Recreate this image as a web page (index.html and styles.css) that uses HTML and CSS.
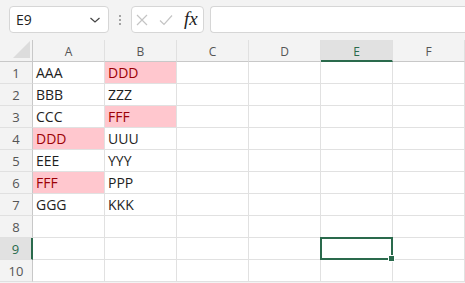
FILE: index.html
```html
<!DOCTYPE html>
<html lang="en">
<head>
<meta charset="utf-8">
<title>Sheet1</title>
<link rel="stylesheet" href="styles.css">
</head>
<body>
<div class="app">
  <div class="formula-row">
    <div class="name-box">
      <span class="name-text">E9</span>
      <svg class="chev" width="12" height="8" viewBox="0 0 12 8"><path d="M1.5 2 L6 6 L10.5 2" fill="none" stroke="#444" stroke-width="1.2"/></svg>
    </div>
    <div class="grip"><span></span><span></span><span></span></div>
    <div class="fx-buttons">
      <svg width="12" height="12" viewBox="0 0 12 12"><path d="M1 1 L11 11 M11 1 L1 11" stroke="#c4c4c4" stroke-width="1.2" fill="none"/></svg>
      <svg width="14" height="12" viewBox="0 0 14 12"><path d="M1 6.5 L5 10.5 L13 1.5" stroke="#c4c4c4" stroke-width="1.2" fill="none"/></svg>
      <span class="fx">fx</span>
    </div>
    <div class="formula-input"></div>
  </div>

  <div class="sheet">
    <div class="corner"><span class="tri"></span></div>
    <div class="col-head">A</div>
    <div class="col-head">B</div>
    <div class="col-head">C</div>
    <div class="col-head">D</div>
    <div class="col-head active">E</div>
    <div class="col-head">F</div>

    <div class="row-head">1</div>
    <div class="cell">AAA</div><div class="cell bad">DDD</div><div class="cell"></div><div class="cell"></div><div class="cell"></div><div class="cell"></div>

    <div class="row-head">2</div>
    <div class="cell">BBB</div><div class="cell">ZZZ</div><div class="cell"></div><div class="cell"></div><div class="cell"></div><div class="cell"></div>

    <div class="row-head">3</div>
    <div class="cell">CCC</div><div class="cell bad">FFF</div><div class="cell"></div><div class="cell"></div><div class="cell"></div><div class="cell"></div>

    <div class="row-head">4</div>
    <div class="cell bad">DDD</div><div class="cell">UUU</div><div class="cell"></div><div class="cell"></div><div class="cell"></div><div class="cell"></div>

    <div class="row-head">5</div>
    <div class="cell">EEE</div><div class="cell">YYY</div><div class="cell"></div><div class="cell"></div><div class="cell"></div><div class="cell"></div>

    <div class="row-head">6</div>
    <div class="cell bad">FFF</div><div class="cell">PPP</div><div class="cell"></div><div class="cell"></div><div class="cell"></div><div class="cell"></div>

    <div class="row-head">7</div>
    <div class="cell">GGG</div><div class="cell">KKK</div><div class="cell"></div><div class="cell"></div><div class="cell"></div><div class="cell"></div>

    <div class="row-head">8</div>
    <div class="cell"></div><div class="cell"></div><div class="cell"></div><div class="cell"></div><div class="cell"></div><div class="cell"></div>

    <div class="row-head active">9</div>
    <div class="cell"></div><div class="cell"></div><div class="cell"></div><div class="cell"></div><div class="cell selected"><span class="handle"></span></div><div class="cell"></div>

    <div class="row-head">10</div>
    <div class="cell"></div><div class="cell"></div><div class="cell"></div><div class="cell"></div><div class="cell"></div><div class="cell"></div>
  </div>
</div>
</body>
</html>
```

FILE: styles.css
```css
html, body {
  margin: 0;
  padding: 0;
  background: #f3f3f3;
}

.app {
  width: 465px;
  height: 283px;
  overflow: hidden;
  font-family: "Segoe UI", "Open Sans", "Noto Sans", sans-serif;
  color: #222;
}

/* Name box + formula bar */
.formula-row {
  display: flex;
  align-items: center;
  height: 40px;
  padding: 0 0 0 9px;
  box-sizing: border-box;
}

.name-box {
  width: 100px;
  height: 27px;
  box-sizing: border-box;
  background: #fff;
  border: 1px solid #d6d6d6;
  border-radius: 4px;
  display: flex;
  align-items: center;
  justify-content: space-between;
  padding: 0 7px 0 6px;
  margin-top: -1px;
}

.name-text {
  font-size: 14px;
  color: #222;
}

.chev {
  display: block;
}

.grip {
  width: 22px;
  display: flex;
  flex-direction: column;
  align-items: center;
  gap: 2px;
  margin-top: -1px;
}

.grip span {
  width: 2px;
  height: 2px;
  background: #8a8a8a;
  border-radius: 1px;
}

.fx-buttons {
  width: 73px;
  height: 27px;
  box-sizing: border-box;
  background: #fff;
  border: 1px solid #d6d6d6;
  border-radius: 4px;
  display: flex;
  align-items: center;
  padding: 0 4px 0 4px;
  gap: 11px;
  margin-top: -1px;
}

.fx-buttons svg {
  display: block;
}

.fx {
  font-family: "Liberation Serif", "DejaVu Serif", serif;
  font-style: italic;
  font-size: 19px;
  line-height: 1;
  color: #222;
  margin-top: -2px;
}

.formula-input {
  flex: 1;
  height: 27px;
  margin-left: 6px;
  margin-top: -1px;
  background: #fff;
  border: 1px solid #d6d6d6;
  border-right: none;
  border-radius: 4px 0 0 4px;
  box-sizing: border-box;
}

/* Worksheet grid */
.sheet {
  display: grid;
  grid-template-columns: 33px repeat(6, 72px);
  grid-template-rows: 22px repeat(10, 22px);
  background: #fff;
}

.corner {
  background: #f3f3f3;
  border-bottom: 1px solid #c8c8c8;
  border-right: 1px solid #c8c8c8;
  box-sizing: border-box;
  position: relative;
}

.tri {
  position: absolute;
  right: 2px;
  bottom: 3px;
  width: 0;
  height: 0;
  border-left: 17px solid transparent;
  border-bottom: 17px solid #dcdcdc;
}

.col-head {
  background: #f3f3f3;
  border-bottom: 1px solid #c8c8c8;
  border-right: 1px solid #e0e0e0;
  box-sizing: border-box;
  display: flex;
  align-items: center;
  justify-content: center;
  font-size: 12px;
  color: #555;
  padding-top: 1px;
}

.col-head.active {
  background: #e1e1e1;
  border-bottom: 2px solid #2a6a4c;
  color: #2a6a4c;
  padding-top: 2px;
}

.row-head {
  background: #f3f3f3;
  border-right: 1px solid #c8c8c8;
  border-bottom: 1px solid #e0e0e0;
  box-sizing: border-box;
  display: flex;
  align-items: center;
  justify-content: center;
  font-size: 13px;
  color: #555;
}

.row-head.active {
  background: #e1e1e1;
  border-right: 2px solid #2a6a4c;
  color: #2a6a4c;
}

.cell {
  border-right: 1px solid #e1e1e1;
  border-bottom: 1px solid #e1e1e1;
  box-sizing: border-box;
  font-size: 14px;
  line-height: 21px;
  padding: 0 0 0 3px;
  white-space: nowrap;
  overflow: hidden;
  color: #1e1e1e;
}

.cell.bad {
  background: #ffc7ce;
  color: #9c0006;
}

.cell.selected {
  position: relative;
  overflow: visible;
}

.cell.selected::after {
  content: "";
  position: absolute;
  left: -1px;
  top: -1px;
  right: -1px;
  bottom: -1px;
  border: 2px solid #2a6a4c;
  pointer-events: none;
}

.handle {
  position: absolute;
  right: -3px;
  bottom: -3px;
  width: 5px;
  height: 5px;
  background: #2a6a4c;
  border: 1px solid #fff;
  z-index: 1;
}
```
